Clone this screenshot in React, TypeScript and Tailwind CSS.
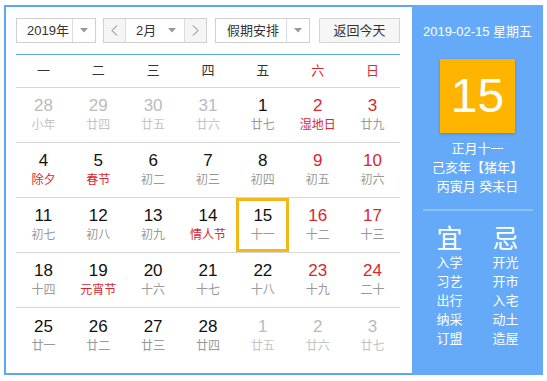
import React from "react"

type Day = {
  n: number
  lunar: string
  dim?: boolean
  red?: boolean
  fest?: boolean
  today?: boolean
}

const weekdays = ["一", "二", "三", "四", "五", "六", "日"]

const rows: Day[][] = [
  [
    { n: 28, lunar: "小年", dim: true },
    { n: 29, lunar: "廿四", dim: true },
    { n: 30, lunar: "廿五", dim: true },
    { n: 31, lunar: "廿六", dim: true },
    { n: 1, lunar: "廿七" },
    { n: 2, lunar: "湿地日", red: true, fest: true },
    { n: 3, lunar: "廿九", red: true },
  ],
  [
    { n: 4, lunar: "除夕", fest: true },
    { n: 5, lunar: "春节", fest: true },
    { n: 6, lunar: "初二" },
    { n: 7, lunar: "初三" },
    { n: 8, lunar: "初四" },
    { n: 9, lunar: "初五", red: true },
    { n: 10, lunar: "初六", red: true },
  ],
  [
    { n: 11, lunar: "初七" },
    { n: 12, lunar: "初八" },
    { n: 13, lunar: "初九" },
    { n: 14, lunar: "情人节", fest: true },
    { n: 15, lunar: "十一", today: true },
    { n: 16, lunar: "十二", red: true },
    { n: 17, lunar: "十三", red: true },
  ],
  [
    { n: 18, lunar: "十四" },
    { n: 19, lunar: "元宵节", fest: true },
    { n: 20, lunar: "十六" },
    { n: 21, lunar: "十七" },
    { n: 22, lunar: "十八" },
    { n: 23, lunar: "十九", red: true },
    { n: 24, lunar: "二十", red: true },
  ],
  [
    { n: 25, lunar: "廿一" },
    { n: 26, lunar: "廿二" },
    { n: 27, lunar: "廿三" },
    { n: 28, lunar: "廿四" },
    { n: 1, lunar: "廿五", dim: true },
    { n: 2, lunar: "廿六", dim: true },
    { n: 3, lunar: "廿七", dim: true },
  ],
]

const yi = ["入学", "习艺", "出行", "纳采", "订盟"]
const ji = ["开光", "开市", "入宅", "动土", "造屋"]

function Caret() {
  return (
    <svg width="8" height="5" viewBox="0 0 8 5">
      <path d="M0 0 L8 0 L4 4.5 Z" fill="#999" />
    </svg>
  )
}

function Chevron({ dir }: { dir: "left" | "right" }) {
  return (
    <svg width="7" height="11" viewBox="0 0 7 11">
      <path
        d={dir === "left" ? "M6 0.5 L1 5.5 L6 10.5" : "M1 0.5 L6 5.5 L1 10.5"}
        fill="none"
        stroke="#777"
        strokeWidth="1"
      />
    </svg>
  )
}

function DayCell({ d }: { d: Day }) {
  const numColor = d.dim ? "text-[#bbbbbb]" : d.red ? "text-[#d9272e]" : "text-[#111]"
  const lunarColor = d.dim
    ? "text-[#c4c4c4]"
    : d.fest
      ? "text-[#d9272e]"
      : "text-[#999]"
  return (
    <div className="flex items-center justify-center">
      <div
        className={`flex h-[54px] w-[53px] flex-col items-center border-[3px] pt-[5px] ${
          d.today ? "border-[#f5b718]" : "border-transparent"
        }`}
      >
        <span className={`text-[17px] leading-[20px] ${numColor}`}>{d.n}</span>
        <span className={`mt-[1px] text-[12px] leading-[16px] ${lunarColor}`}>{d.lunar}</span>
      </div>
    </div>
  )
}

export default function App() {
  return (
    <div
      className="h-[381px] w-[547px] bg-white pl-[4px] pt-[5px]"
      style={{ fontFamily: '"Liberation Sans", "Noto Sans CJK SC", sans-serif' }}
    >
      <div className="flex h-[370px] w-[539px]">
        <div className="flex-1 border-2 border-r-0 border-[#5da6f1] pl-[10px] pr-[12px] pt-[11px]">
          <div className="flex h-[25px] text-[13px] text-[#333]">
            <div className="flex w-[80px] border border-[#cfcfcf] bg-white">
              <span className="flex w-[55px] items-center pl-[10px] leading-none">2019年</span>
              <span className="flex flex-1 items-center justify-center border-l border-[#dcdcdc]">
                <Caret />
              </span>
            </div>
            <div className="ml-[7px] flex w-[104px] border border-[#cfcfcf] bg-white">
              <span className="flex w-[22px] items-center justify-center border-r border-[#dcdcdc] bg-[#f5f5f5]">
                <Chevron dir="left" />
              </span>
              <span className="flex flex-1 items-center pl-[10px] leading-none">
                2月
                <span className="ml-auto mr-[8px] flex">
                  <Caret />
                </span>
              </span>
              <span className="flex w-[22px] items-center justify-center border-l border-[#dcdcdc] bg-[#f5f5f5]">
                <Chevron dir="right" />
              </span>
            </div>
            <div className="ml-[8px] flex w-[95px] border border-[#cfcfcf] bg-white">
              <span className="flex w-[70px] items-center pl-[11px] leading-none">假期安排</span>
              <span className="flex flex-1 items-center justify-center border-l border-[#dcdcdc]">
                <Caret />
              </span>
            </div>
            <div className="ml-[9px] flex w-[81px] items-center justify-center border border-[#d6d6d6] bg-[#f6f6f6] leading-none">
              返回今天
            </div>
          </div>

          <div className="mt-[11px] border-t border-[#5da6f1]">
            <div className="grid h-[33px] grid-cols-7 border-b border-[#d8d8d8] text-[13px]">
              {weekdays.map((w, i) => (
                <div
                  key={w}
                  className={`flex items-center justify-center ${i >= 5 ? "text-[#d9272e]" : "text-[#333]"}`}
                >
                  {w}
                </div>
              ))}
            </div>
            {rows.map((r, i) => (
              <div
                key={i}
                className={`grid h-[55px] grid-cols-7 ${i < rows.length - 1 ? "border-b border-[#d8d8d8]" : ""}`}
              >
                {r.map((d, j) => (
                  <DayCell key={j} d={d} />
                ))}
              </div>
            ))}
          </div>
        </div>

        <div className="flex w-[131px] flex-col items-center bg-[#64aaf8] pt-[19px] text-white">
          <div className="text-[13px] leading-[16px]">2019-02-15 星期五</div>
          <div className="mt-[19px] flex h-[74px] w-[75px] items-center justify-center bg-[#ffb400] text-[48px] leading-none shadow-[0_1px_3px_rgba(0,0,0,0.2)]">
            15
          </div>
          <div className="mt-[6px] flex flex-col items-center text-[13px] leading-[19px]">
            <span>正月十一</span>
            <span>己亥年【猪年】</span>
            <span>丙寅月 癸未日</span>
          </div>
          <div className="mt-[13px] h-[2px] w-[110px] bg-[#8dc2f9]" />
          <div className="mt-[14px] flex gap-[16px]">
            <div className="flex w-[40px] flex-col items-center">
              <span className="text-[26px] leading-[28px]">宜</span>
              <div className="flex flex-col items-center text-[13px] leading-[19px]">
                {yi.map((t) => (
                  <span key={t}>{t}</span>
                ))}
              </div>
            </div>
            <div className="flex w-[40px] flex-col items-center">
              <span className="text-[26px] leading-[28px]">忌</span>
              <div className="flex flex-col items-center text-[13px] leading-[19px]">
                {ji.map((t) => (
                  <span key={t}>{t}</span>
                ))}
              </div>
            </div>
          </div>
        </div>
      </div>
    </div>
  )
}
